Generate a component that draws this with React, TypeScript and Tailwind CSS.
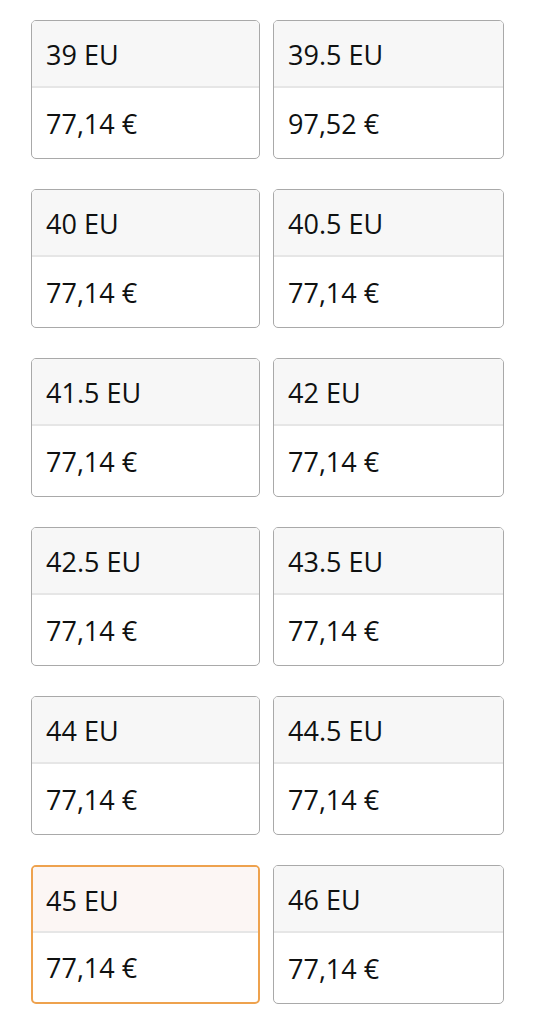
import React from 'react';

type Size = { size: string; price: string; selected?: boolean };

const sizes: Size[] = [
  { size: '39 EU', price: '77,14 €' },
  { size: '39.5 EU', price: '97,52 €' },
  { size: '40 EU', price: '77,14 €' },
  { size: '40.5 EU', price: '77,14 €' },
  { size: '41.5 EU', price: '77,14 €' },
  { size: '42 EU', price: '77,14 €' },
  { size: '42.5 EU', price: '77,14 €' },
  { size: '43.5 EU', price: '77,14 €' },
  { size: '44 EU', price: '77,14 €' },
  { size: '44.5 EU', price: '77,14 €' },
  { size: '45 EU', price: '77,14 €', selected: true },
  { size: '46 EU', price: '77,14 €' },
];

const SizeCard: React.FC<Size> = ({ size, price, selected }) => (
  <div
    className={
      selected
        ? 'h-[139px] flex flex-col rounded-[5px] border-2 border-[#eea24e] overflow-hidden bg-white'
        : 'h-[139px] flex flex-col rounded-[5px] border border-[#a9a9a9] overflow-hidden bg-white'
    }
  >
    <div
      className={
        selected
          ? 'h-[66px] flex items-center pt-[2px] px-[13px] bg-[#fcf6f4] border-b-2 border-[#e6e6e6]'
          : 'h-[67px] flex items-center pt-[2px] px-[14px] bg-[#f7f7f7] border-b-2 border-[#e6e6e6]'
      }
    >
      <span className="text-[27px] leading-none text-[#0f1111]">{size}</span>
    </div>
    <div className={selected ? 'flex-1 flex items-center px-[13px]' : 'flex-1 flex items-center pt-[1px] px-[14px]'}>
      <span className="text-[27px] leading-none text-[#0f1111]">{price}</span>
    </div>
  </div>
);

const App: React.FC = () => {
  return (
    <div className="min-h-screen bg-white font-['Open_Sans',sans-serif]">
      <div className="pt-[20px] pl-[31px] w-[504px] grid grid-cols-[229px_231px] gap-x-[13px] gap-y-[30px]">
        {sizes.map((s) => (
          <SizeCard key={s.size} {...s} />
        ))}
      </div>
    </div>
  );
};

export default App;
